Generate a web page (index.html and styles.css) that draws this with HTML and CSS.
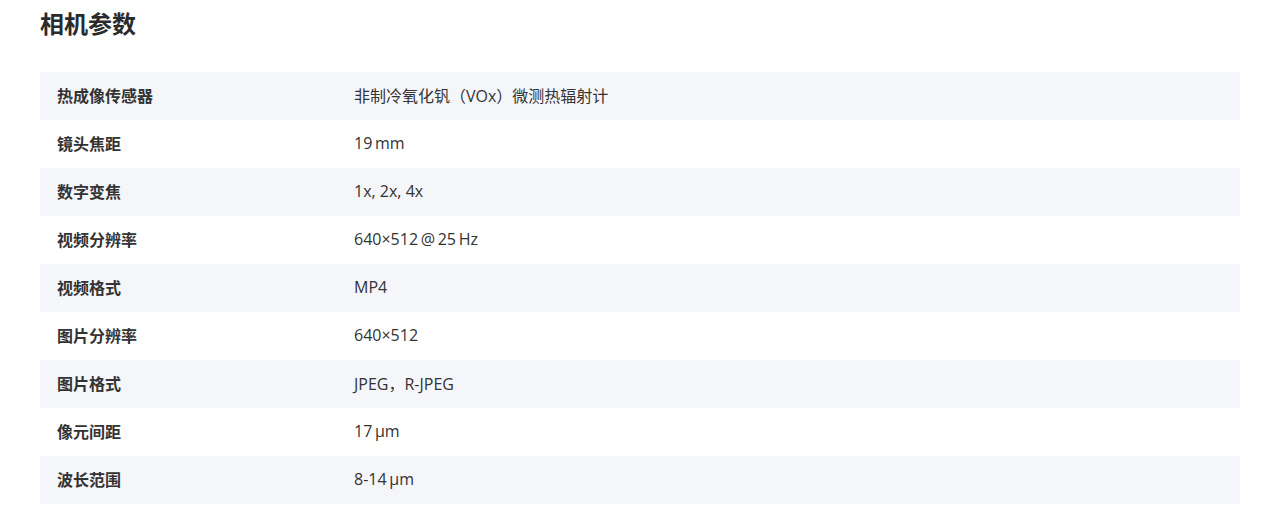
FILE: index.html
```html
<!DOCTYPE html>
<html lang="zh-CN">
<head>
<meta charset="utf-8">
<title>相机参数</title>
<link rel="stylesheet" href="styles.css">
</head>
<body>
<div class="page">
  <h2 class="title">相机参数</h2>
  <div class="specs">
    <div class="row"><div class="label">热成像传感器</div><div class="value">非制冷氧化钒（VOx）微测热辐射计</div></div>
    <div class="row"><div class="label">镜头焦距</div><div class="value">19&#8201;mm</div></div>
    <div class="row"><div class="label">数字变焦</div><div class="value">1x, 2x, 4x</div></div>
    <div class="row"><div class="label">视频分辨率</div><div class="value">640×512&#8201;@&#8201;25&#8201;Hz</div></div>
    <div class="row"><div class="label">视频格式</div><div class="value">MP4</div></div>
    <div class="row"><div class="label">图片分辨率</div><div class="value">640×512</div></div>
    <div class="row"><div class="label">图片格式</div><div class="value">JPEG，R-JPEG</div></div>
    <div class="row"><div class="label">像元间距</div><div class="value">17&#8201;μm</div></div>
    <div class="row"><div class="label">波长范围</div><div class="value">8-14&#8201;μm</div></div>
  </div>
</div>
</body>
</html>
```
FILE: styles.css
```css
html, body {
  margin: 0;
  padding: 0;
  background: #ffffff;
}
body {
  font-family: "Open Sans", "Noto Sans CJK SC", sans-serif;
  color: #333333;
}
.page {
  padding: 0 40px;
}
.title {
  margin: 0;
  padding-top: 8px;
  height: 72px;
  box-sizing: border-box;
  font-size: 24px;
  line-height: 32px;
  font-weight: 700;
  color: #2b2b2b;
}
.specs {
  display: flex;
  flex-direction: column;
}
.row {
  display: flex;
  align-items: center;
  height: 48px;
  padding-bottom: 2px;
  box-sizing: border-box;
  font-size: 16px;
}
.row:nth-child(odd) {
  background: #f5f6fa;
}
.label {
  width: 314px;
  padding-left: 17px;
  box-sizing: border-box;
  font-weight: 700;
  color: #333333;
}
.value {
  flex: 1;
  color: #333333;
}
```
